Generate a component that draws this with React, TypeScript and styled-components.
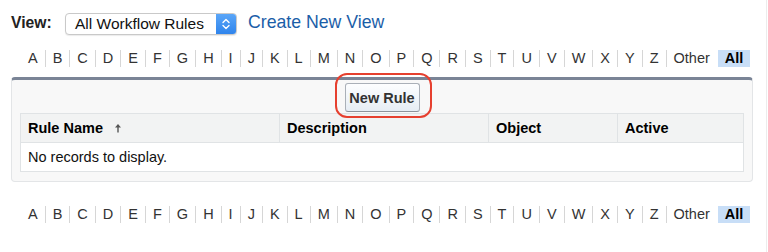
import React from "react";
import styled, { createGlobalStyle } from "styled-components";

const Global = createGlobalStyle`
  html, body { margin: 0; padding: 0; background: #fff; }
  body { font-family: "Liberation Sans", Arial, Helvetica, sans-serif; color: #222; }
`;

const Page = styled.div`
  width: 755px;
  min-height: 252px;
  padding-left: 11px;
  border-right: 1px solid #ececec;
  box-sizing: content-box;
  display: flex;
  flex-direction: column;
`;

const ViewBar = styled.div`
  display: flex;
  align-items: center;
  height: 22px;
  margin-top: 13px;
`;

const ViewLabel = styled.span`
  font-weight: bold;
  font-size: 15.7px;
  color: #222;
  width: 54px;
  margin-top: -2px;
`;

const SelectBox = styled.div`
  display: flex;
  align-items: stretch;
  width: 172px;
  height: 22px;
  box-sizing: border-box;
  border: 1px solid #c9c9c9;
  border-radius: 4px;
  background: #fff;
  box-shadow: 0 1px 1px rgba(0, 0, 0, 0.08);
  overflow: hidden;
`;

const SelectText = styled.span`
  flex: 1;
  font-size: 15.5px;
  line-height: 20px;
  padding-left: 9px;
  color: #111;
`;

const Stepper = styled.span`
  width: 20px;
  background: linear-gradient(#5aa6f8, #2f84ec);
  display: flex;
  align-items: center;
  justify-content: center;
`;

const CreateLink = styled.a`
  margin-left: 11px;
  font-size: 17.7px;
  color: #1b5ea8;
  text-decoration: none;
  margin-top: -3px;
`;

const AlphaRow = styled.div<{ $top: number }>`
  display: flex;
  margin-top: ${(p) => p.$top}px;
  margin-left: 10px;
  font-size: 14.5px;
  line-height: 17px;
`;

const AlphaItem = styled.span<{ $first?: boolean; $selected?: boolean }>`
  padding: 0 7px;
  color: ${(p) => (p.$selected ? "#000" : "#333")};
  font-weight: ${(p) => (p.$selected ? "bold" : "normal")};
  background: ${(p) => (p.$selected ? "#c8def7" : "transparent")};
  border-left: ${(p) => (p.$first || p.$selected ? "none" : "1px solid #d6d6d6")};
  margin-left: ${(p) => (p.$selected ? "1px" : "0")};
`;

const Panel = styled.div`
  margin-top: 10px;
  width: 742px;
  box-sizing: border-box;
  background: #f8f8f8;
  border: 1px solid #e3e5e7;
  border-top: 3px solid #7a8496;
  border-radius: 4px;
  padding: 3px 9px 9px;
  display: flex;
  flex-direction: column;
  align-items: center;
`;

const ButtonWrap = styled.span`
  position: relative;
  display: inline-flex;
`;

const Highlight = styled.span`
  position: absolute;
  left: -10px;
  top: -10px;
  width: 97px;
  height: 45px;
  box-sizing: border-box;
  border: 2px solid #e6402f;
  border-radius: 12px;
  pointer-events: none;
`;

const Button = styled.button`
  width: 75px;
  height: 29px;
  padding: 0 3px;
  border: 1px solid #aab0b8;
  border-bottom-color: #8d939b;
  border-radius: 3px;
  background: linear-gradient(#fdfeff, #e6edf4);
  font-family: inherit;
  font-weight: bold;
  font-size: 14.5px;
  color: #333;
`;

const Table = styled.div`
  margin-top: 1px;
  width: 100%;
  border: 1px solid #e0e3e5;
  background: #fff;
`;

const HeaderRow = styled.div`
  display: grid;
  grid-template-columns: 258px 209px 129px 1fr;
  background: #f2f3f3;
  height: 28px;
`;

const HeaderCell = styled.div<{ $first?: boolean }>`
  display: flex;
  align-items: center;
  padding-left: 7px;
  font-weight: bold;
  font-size: 14.5px;
  color: #000;
  border-left: ${(p) => (p.$first ? "none" : "1px solid #e0e3e5")};
`;

const SortIcon = styled.svg`
  margin-left: 11px;
  margin-top: -1px;
`;

const BodyRow = styled.div`
  border-top: 1px solid #e0e3e5;
  height: 28px;
  display: flex;
  align-items: center;
  padding-left: 7px;
  font-size: 14.5px;
  color: #111;
`;

const letters = "ABCDEFGHIJKLMNOPQRSTUVWXYZ".split("");

function Alphabet({ top }: { top: number }) {
  return (
    <AlphaRow $top={top}>
      {letters.map((l, i) => (
        <AlphaItem key={l} $first={i === 0}>
          {l}
        </AlphaItem>
      ))}
      <AlphaItem>Other</AlphaItem>
      <AlphaItem $selected>All</AlphaItem>
    </AlphaRow>
  );
}

export default function App() {
  return (
    <>
      <Global />
      <Page>
        <ViewBar>
          <ViewLabel>View:</ViewLabel>
          <SelectBox>
            <SelectText>All Workflow Rules</SelectText>
            <Stepper>
              <svg width="10" height="14" viewBox="0 0 10 14" fill="none">
                <path d="M2 5.5 L5 2.5 L8 5.5" stroke="#fff" strokeWidth="1.4" strokeLinecap="round" strokeLinejoin="round" />
                <path d="M2 8.5 L5 11.5 L8 8.5" stroke="#fff" strokeWidth="1.4" strokeLinecap="round" strokeLinejoin="round" />
              </svg>
            </Stepper>
          </SelectBox>
          <CreateLink href="#">Create New View</CreateLink>
        </ViewBar>
        <Alphabet top={15} />
        <Panel>
          <ButtonWrap>
            <Button>New Rule</Button>
            <Highlight />
          </ButtonWrap>
          <Table>
            <HeaderRow>
              <HeaderCell $first>
                Rule Name
                <SortIcon width="8" height="10" viewBox="0 0 8 10">
                  <path d="M4 9.5 V2" stroke="#555" strokeWidth="1.4" />
                  <path d="M1 4.5 L4 1 L7 4.5 Z" fill="#555" />
                </SortIcon>
              </HeaderCell>
              <HeaderCell>Description</HeaderCell>
              <HeaderCell>Object</HeaderCell>
              <HeaderCell>Active</HeaderCell>
            </HeaderRow>
            <BodyRow>No records to display.</BodyRow>
          </Table>
        </Panel>
        <Alphabet top={24} />
      </Page>
    </>
  );
}
